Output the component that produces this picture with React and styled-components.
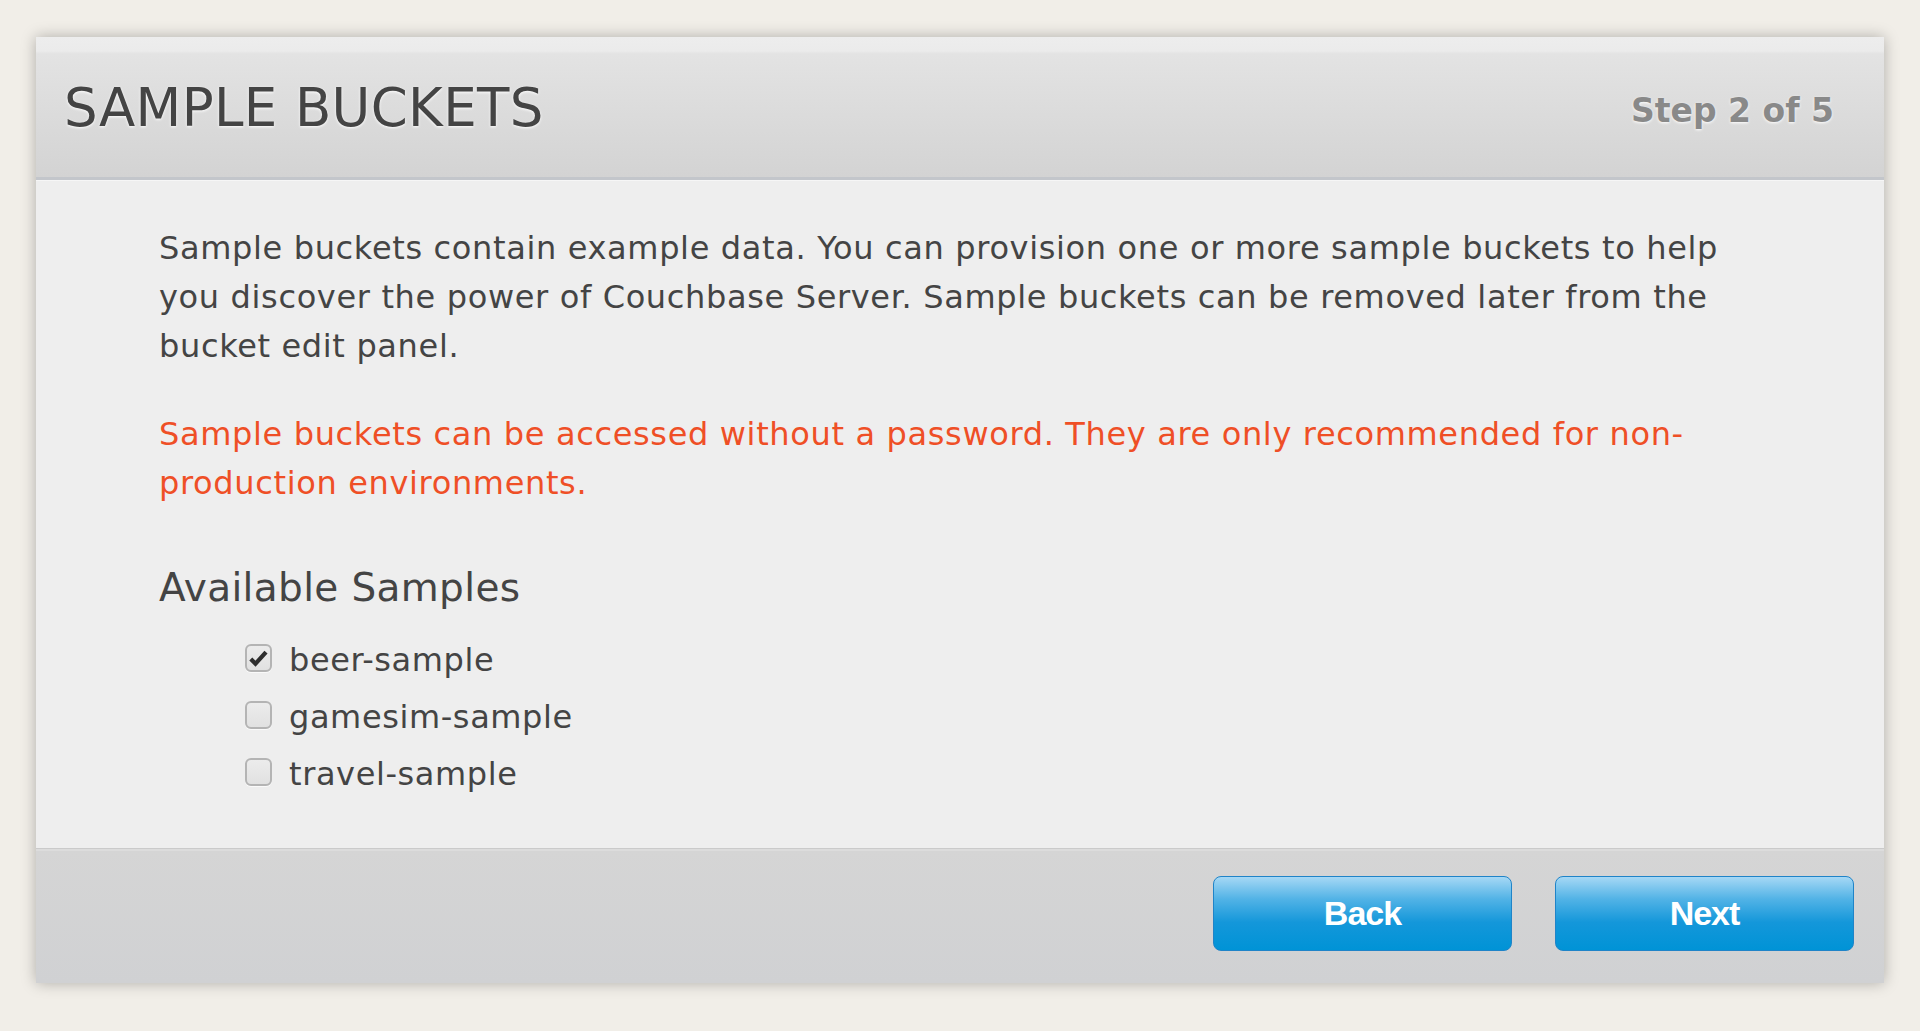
import React from 'react';

import styled, { createGlobalStyle } from 'styled-components';

const GlobalStyle = createGlobalStyle`
  html,
  body {
    margin: 0;
    padding: 0;
    background-color: #f1eee8;
  }

  body {
    font-family: 'DejaVu Sans', Verdana, sans-serif;
    color: #444;
  }
`;

const Page = styled.main`
  height: 1031px;
  padding: 37px 36px 0;
  box-sizing: border-box;
`;

const Panel = styled.section`
  display: flex;
  flex-direction: column;
  background-color: #eee;
  box-shadow: 0 0 14px rgba(0, 0, 0, 0.28);
`;

const Header = styled.header`
  height: 140px;
  display: flex;
  align-items: center;
  justify-content: space-between;
  padding: 0 50px 0 28px;
  background: linear-gradient(
    #ededed 0,
    #ebebeb 10%,
    #e3e3e3 12%,
    #d3d3d3 100%
  );
  border-bottom: 3px solid #c3c6cb;
  box-shadow: 0 1px 0 #f6f6f6;
`;

const Title = styled.h1`
  margin: 0;
  font-size: 53px;
  font-weight: normal;
  letter-spacing: 0.35px;
  color: #444;
  text-shadow: 0 1px 3px #fff;
`;

const Step = styled.span`
  margin-top: 7px;
  font-size: 33px;
  font-weight: bold;
  color: #898989;
  text-shadow: 0 1px 3px #fff;
`;

const Body = styled.div`
  padding: 44px 123px 45px;
`;

const Text = styled.p`
  margin: 0 0 ${props => props.gap || 0}px;
  font-size: 32px;
  line-height: 49px;
  letter-spacing: 0.65px;
  color: ${props => (props.warning ? '#ef4f26' : '#444')};
`;

const Subtitle = styled.h2`
  margin: 0 0 21px;
  font-size: 39px;
  line-height: 47px;
  font-weight: normal;
  letter-spacing: 0.35px;
  color: #444;
`;

const SampleList = styled.ul`
  list-style: none;
  margin: 0;
  padding: 0 0 0 86px;
`;

const Sample = styled.li`
  display: flex;
  align-items: center;
  gap: 17px;
  height: 57px;
  font-size: 32px;
  line-height: 57px;
  letter-spacing: 0.6px;
`;

const Box = styled.span`
  width: 27px;
  height: 28px;
  margin-bottom: 5px;
  box-sizing: border-box;
  display: flex;
  align-items: center;
  justify-content: center;
  border: 2px solid #b4b4b4;
  border-radius: 6px;
  background: linear-gradient(#ececec, #e1e1e1);
  box-shadow: 0 1px 0 #fafafa;
`;

const Footer = styled.footer`
  height: 135px;
  display: flex;
  align-items: center;
  justify-content: flex-end;
  gap: 43px;
  padding: 0 30px 6px;
  box-sizing: border-box;
  background: linear-gradient(#d5d5d5, #d0d1d3);
  border-top: 1px solid #cacaca;
  box-shadow: inset 0 2px 0 #dcdcdc;
`;

const Button = styled.button`
  width: 299px;
  height: 75px;
  padding: 0;
  border: 1px solid #1f84c8;
  border-radius: 8px;
  background: linear-gradient(#a6d8f5 0%, #52b3e6 30%, #1497da 62%, #0093d6 100%);
  color: #fff;
  font-family: 'Liberation Sans', Arial, sans-serif;
  font-size: 34px;
  font-weight: bold;
  letter-spacing: -1px;
  cursor: pointer;
`;

const samples = [
  { id: 'beer-sample', checked: true },
  { id: 'gamesim-sample', checked: false },
  { id: 'travel-sample', checked: false }
];

const Check = () => (
  <svg width="19" height="17" viewBox="0 0 19 17">
    <path d="M1.8 9 L6.5 13.8 L17 2.2" fill="none" stroke="#2e2e2e" strokeWidth="4.2" strokeLinejoin="miter" />
  </svg>
);

const App = () => (
  <>
    <GlobalStyle />
    <Page>
      <Panel>
        <Header>
          <Title>SAMPLE BUCKETS</Title>
          <Step>Step 2 of 5</Step>
        </Header>

        <Body>
          <Text gap={39}>
            Sample buckets contain example data. You can provision one or more
            sample buckets to help you discover the power of Couchbase Server.
            Sample buckets can be removed later from the bucket edit panel.
          </Text>
          <Text warning gap={56}>
            Sample buckets can be accessed without a password. They are only
            recommended for non-production environments.
          </Text>

          <Subtitle>Available Samples</Subtitle>
          <SampleList>
            {samples.map(sample => (
              <Sample key={sample.id}>
                <Box>{sample.checked && <Check />}</Box>
                {sample.id}
              </Sample>
            ))}
          </SampleList>
        </Body>

        <Footer>
          <Button>Back</Button>
          <Button>Next</Button>
        </Footer>
      </Panel>
    </Page>
  </>
);

export default App;
